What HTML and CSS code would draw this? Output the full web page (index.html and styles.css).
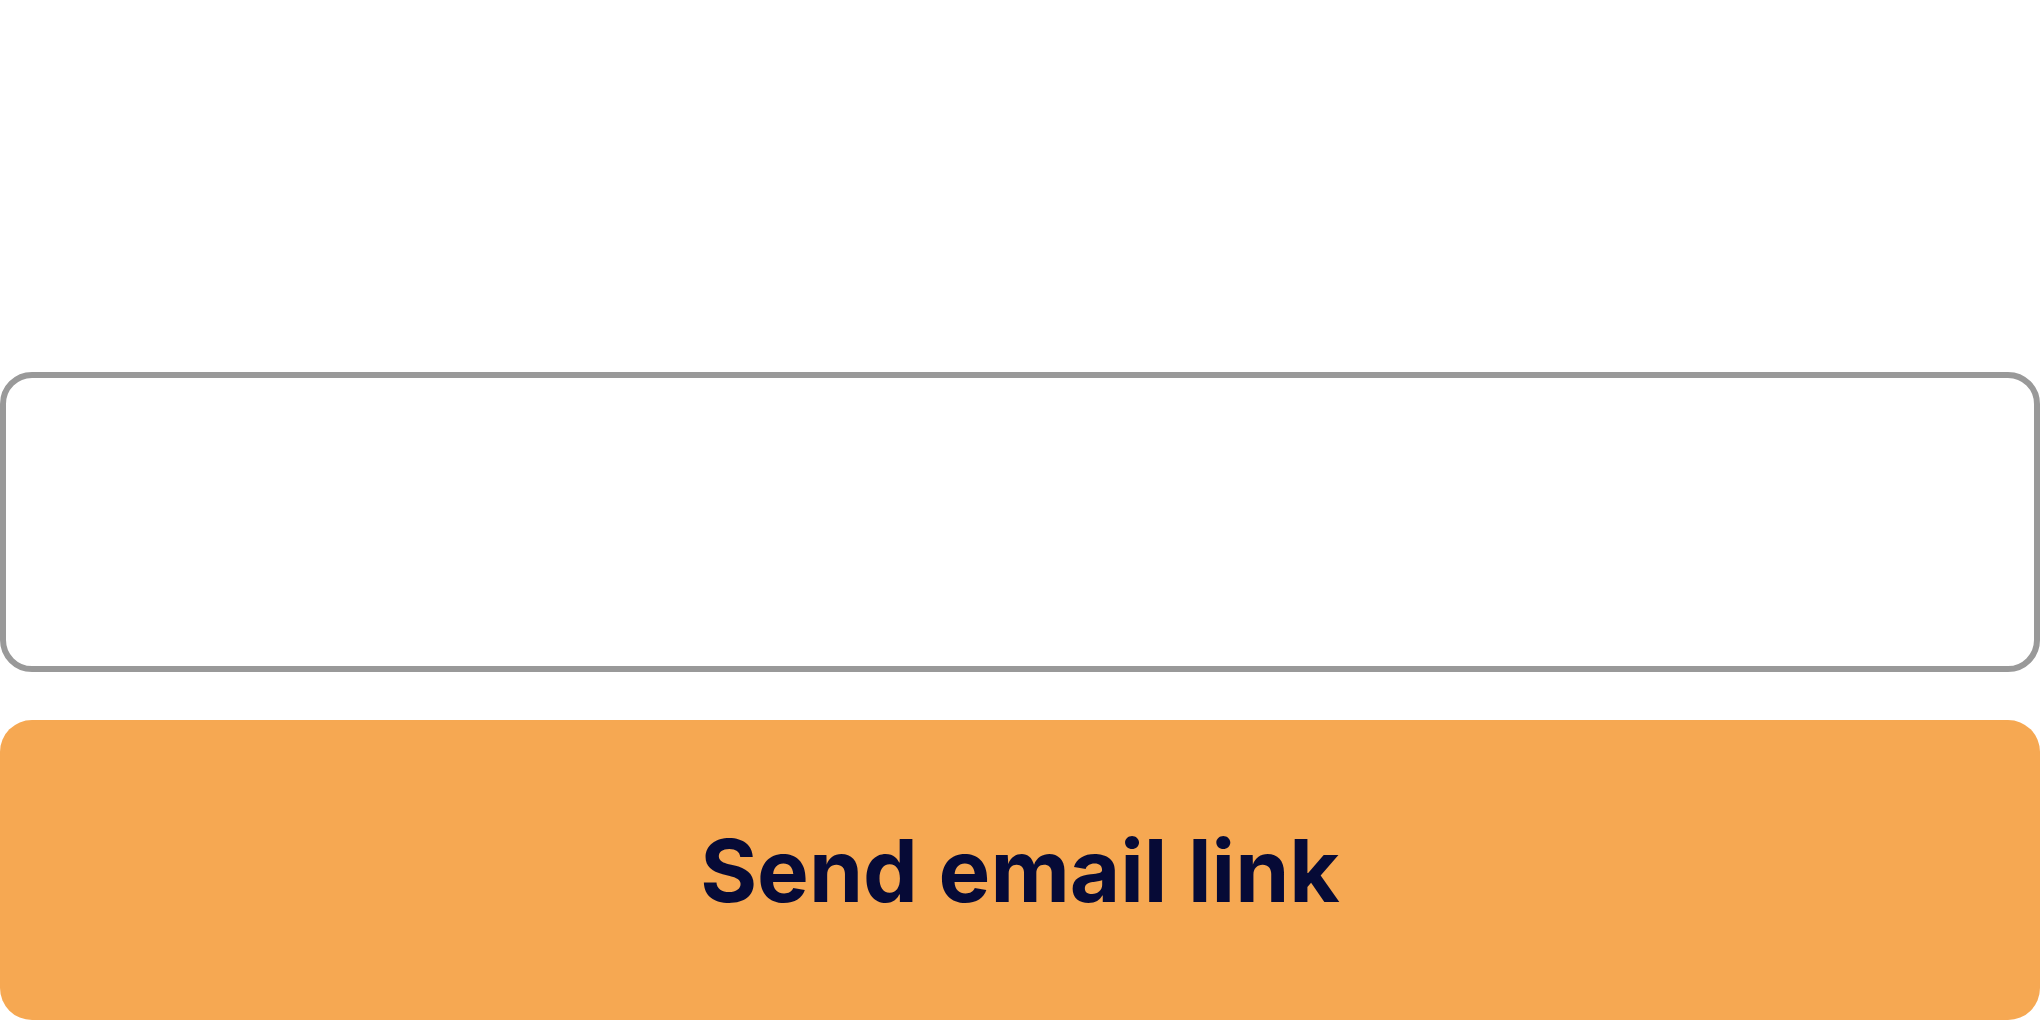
FILE: index.html
```html
<!DOCTYPE html>
<html lang="en">
<head>
<meta charset="utf-8">
<title>Send email link</title>
<link rel="stylesheet" href="styles.css">
</head>
<body>
  <form class="form">
    <input class="field" type="email" aria-label="Email">
    <button class="submit" type="button">Send email link</button>
  </form>
</body>
</html>
```

FILE: styles.css
```css
html, body {
  margin: 0;
  padding: 0;
  background: #ffffff;
}

body {
  font-family: Inter, "Liberation Sans", sans-serif;
}

.form {
  box-sizing: border-box;
  height: 100vh;
  display: flex;
  flex-direction: column;
  justify-content: flex-end;
  gap: 48px;
  margin: 0;
}

.field {
  box-sizing: border-box;
  display: block;
  width: 100%;
  height: 300px;
  margin: 0;
  padding: 0 40px;
  border: 6px solid #999999;
  border-radius: 32px;
  background: #ffffff;
  outline: none;
  font: inherit;
}

.submit {
  box-sizing: border-box;
  display: flex;
  align-items: center;
  justify-content: center;
  width: 100%;
  height: 300px;
  margin: 0;
  padding: 0;
  border: 0;
  border-radius: 32px;
  background: #f6a852;
  color: #060a36;
  font-family: Inter, "Liberation Sans", sans-serif;
  font-weight: 700;
  font-size: 87px;
  cursor: pointer;
}
```
